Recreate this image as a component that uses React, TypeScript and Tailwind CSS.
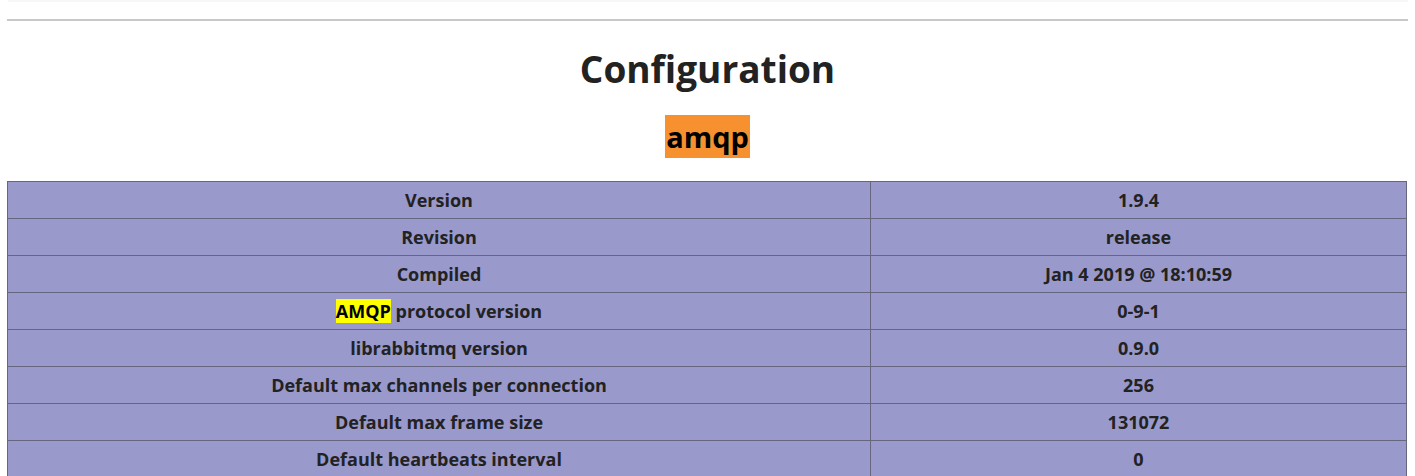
const rows: [React.ReactNode, string][] = [
  ["Version", "1.9.4"],
  ["Revision", "release"],
  ["Compiled", "Jan 4 2019 @ 18:10:59"],
  [
    <>
      <span className="bg-[#ffff00] text-black">AMQP</span> protocol version
    </>,
    "0-9-1",
  ],
  ["librabbitmq version", "0.9.0"],
  ["Default max channels per connection", "256"],
  ["Default max frame size", "131072"],
  ["Default heartbeats interval", "0"],
];

export default function App() {
  return (
    <div className="min-h-[476px] bg-white font-['Open_Sans','Noto_Sans',sans-serif] text-[#222]">
      <div className="ml-[8px] mr-[7px] h-[2px] bg-[#f7f7f7]" />
      <hr className="mx-[7px] mt-[17px] h-[2px] border-0 bg-[#c8c8c8]" />
      <h1 className="mt-[24px] text-center text-[37px] font-bold leading-[48px] text-[#222]">
        Configuration
      </h1>
      <h2 className="mt-[24px] text-center text-[29px] font-bold leading-[40px]">
        <span className="bg-[#f7902e] px-[1px] py-[2px] text-black">amqp</span>
      </h2>
      <table className="mx-[7px] mt-[24px] w-[1400px] border-collapse">
        <tbody>
          {rows.map(([k, v], i) => (
            <tr key={i} className="h-[37px] bg-[#9999cc]">
              <td className="w-[863px] border border-[#666680] px-[5px] text-center text-[18px] font-bold">
                {k}
              </td>
              <td className="border border-[#666680] px-[5px] text-center text-[18px] font-bold">
                {v}
              </td>
            </tr>
          ))}
        </tbody>
      </table>
    </div>
  );
}
